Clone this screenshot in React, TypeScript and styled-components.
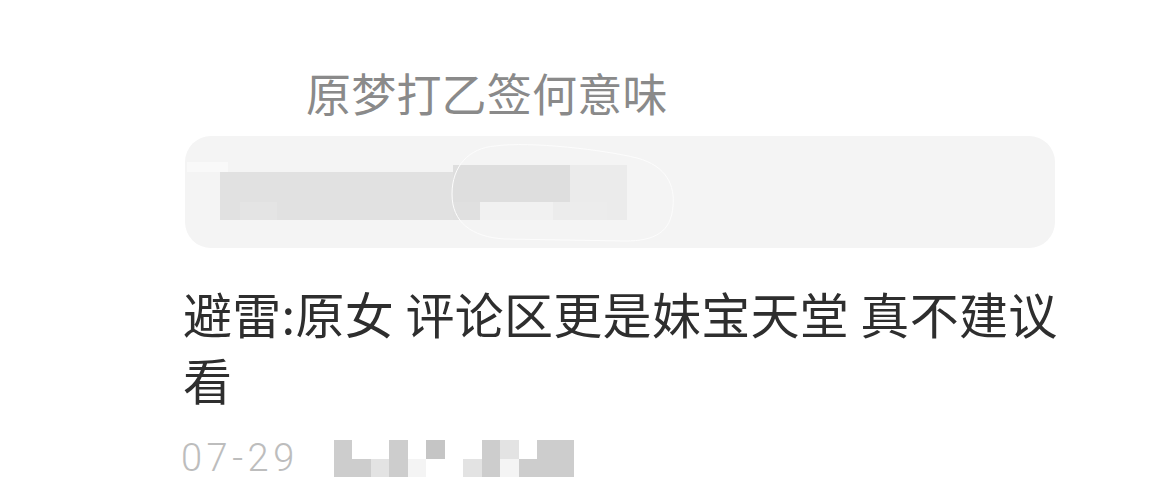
import React from 'react';
import styled, { createGlobalStyle } from 'styled-components';

const GlobalStyle = createGlobalStyle`
    html, body {
        margin: 0;
        padding: 0;
        background: #ffffff;
    }
    body {
        font-family: "Noto Sans CJK SC", "Noto Sans", sans-serif;
    }
`;

const Page = styled.div`
    width: 1152px;
    height: 480px;
    box-sizing: border-box;
    padding: 70px 0 0 183px;
    background: #ffffff;
    overflow: hidden;
`;

const QuoteTitle = styled.div`
    margin-left: 123px;
    font-size: 45px;
    line-height: 45px;
    color: #8a8a8a;
    letter-spacing: 0.2px;
`;

const QuoteCard = styled.div`
    position: relative;
    margin: 21px 0 0 2px;
    width: 870px;
    height: 112px;
    border-radius: 26px;
    background: #f4f4f4;
    overflow: hidden;
`;

const CardMosaic = styled.svg`
    display: block;
    width: 100%;
    height: 100%;
`;

const CommentText = styled.p`
    margin: 32px 0 0 0;
    width: 880px;
    font-size: 49px;
    line-height: 66px;
    color: #2e2e2e;
    letter-spacing: 0.3px;
`;

const MetaRow = styled.div`
    display: flex;
    align-items: center;
    gap: 35px;
    margin-top: 28px;
    height: 37px;
`;

const DateText = styled.span`
    font-family: Roboto, "Noto Sans", sans-serif;
    font-weight: 300;
    font-size: 38px;
    line-height: 37px;
    letter-spacing: 4.5px;
    margin-left: -2px;
    color: #bdbdbd;
`;

const Mosaic = styled.div`
    display: grid;
    grid-template-columns: repeat(13, 18.5px);
    grid-auto-rows: 18.5px;
`;

const MosaicCell = styled.div<{ $shade: string }>`
    background: ${(p) => p.$shade};
`;

const G = '#cdcdcd';
const D = '#c5c5c5';
const L = '#e3e3e3';
const V = '#f4f4f4';
const W = 'transparent';

const nameMosaic = [
    [G, W, W, G, W, D, W, W, G, L, W, G, G],
    [G, G, L, G, V, W, W, L, G, V, G, G, G],
];

export default function App() {
    return (
        <>
            <GlobalStyle />
            <Page>
                <QuoteTitle>原梦打乙签何意味</QuoteTitle>
                <QuoteCard>
                    <CardMosaic viewBox="0 0 870 112">
                        <rect x="2" y="26" width="41" height="10" fill="#f9f9f9" />
                        <rect x="35" y="36" width="233" height="48" fill="#e1e1e1" />
                        <rect x="55" y="66" width="37" height="18" fill="#e4e4e4" />
                        <rect x="268" y="29" width="117" height="37" fill="#dedede" />
                        <rect x="385" y="29" width="57" height="37" fill="#ebebeb" />
                        <rect x="268" y="66" width="27" height="18" fill="#e0e0e0" />
                        <rect x="295" y="66" width="73" height="18" fill="#f1f1f1" />
                        <rect x="368" y="66" width="54" height="18" fill="#ececec" />
                        <rect x="422" y="66" width="20" height="18" fill="#ebebeb" />
                        <path
                            d="M 310 10 C 345 5, 420 14, 452 22 C 482 30, 490 50, 488 70 C 486 96, 470 105, 440 105 L 320 103 C 286 101, 267 86, 267 58 C 267 30, 284 12, 310 10 Z"
                            fill="none"
                            stroke="#fcfcfc"
                            strokeWidth="1"
                        />
                    </CardMosaic>
                </QuoteCard>
                <CommentText>避雷:原女 评论区更是妹宝天堂 真不建议看</CommentText>
                <MetaRow>
                    <DateText>07-29</DateText>
                    <Mosaic>
                        {nameMosaic.flat().map((shade, i) => (
                            <MosaicCell key={i} $shade={shade} />
                        ))}
                    </Mosaic>
                </MetaRow>
            </Page>
        </>
    );
}
